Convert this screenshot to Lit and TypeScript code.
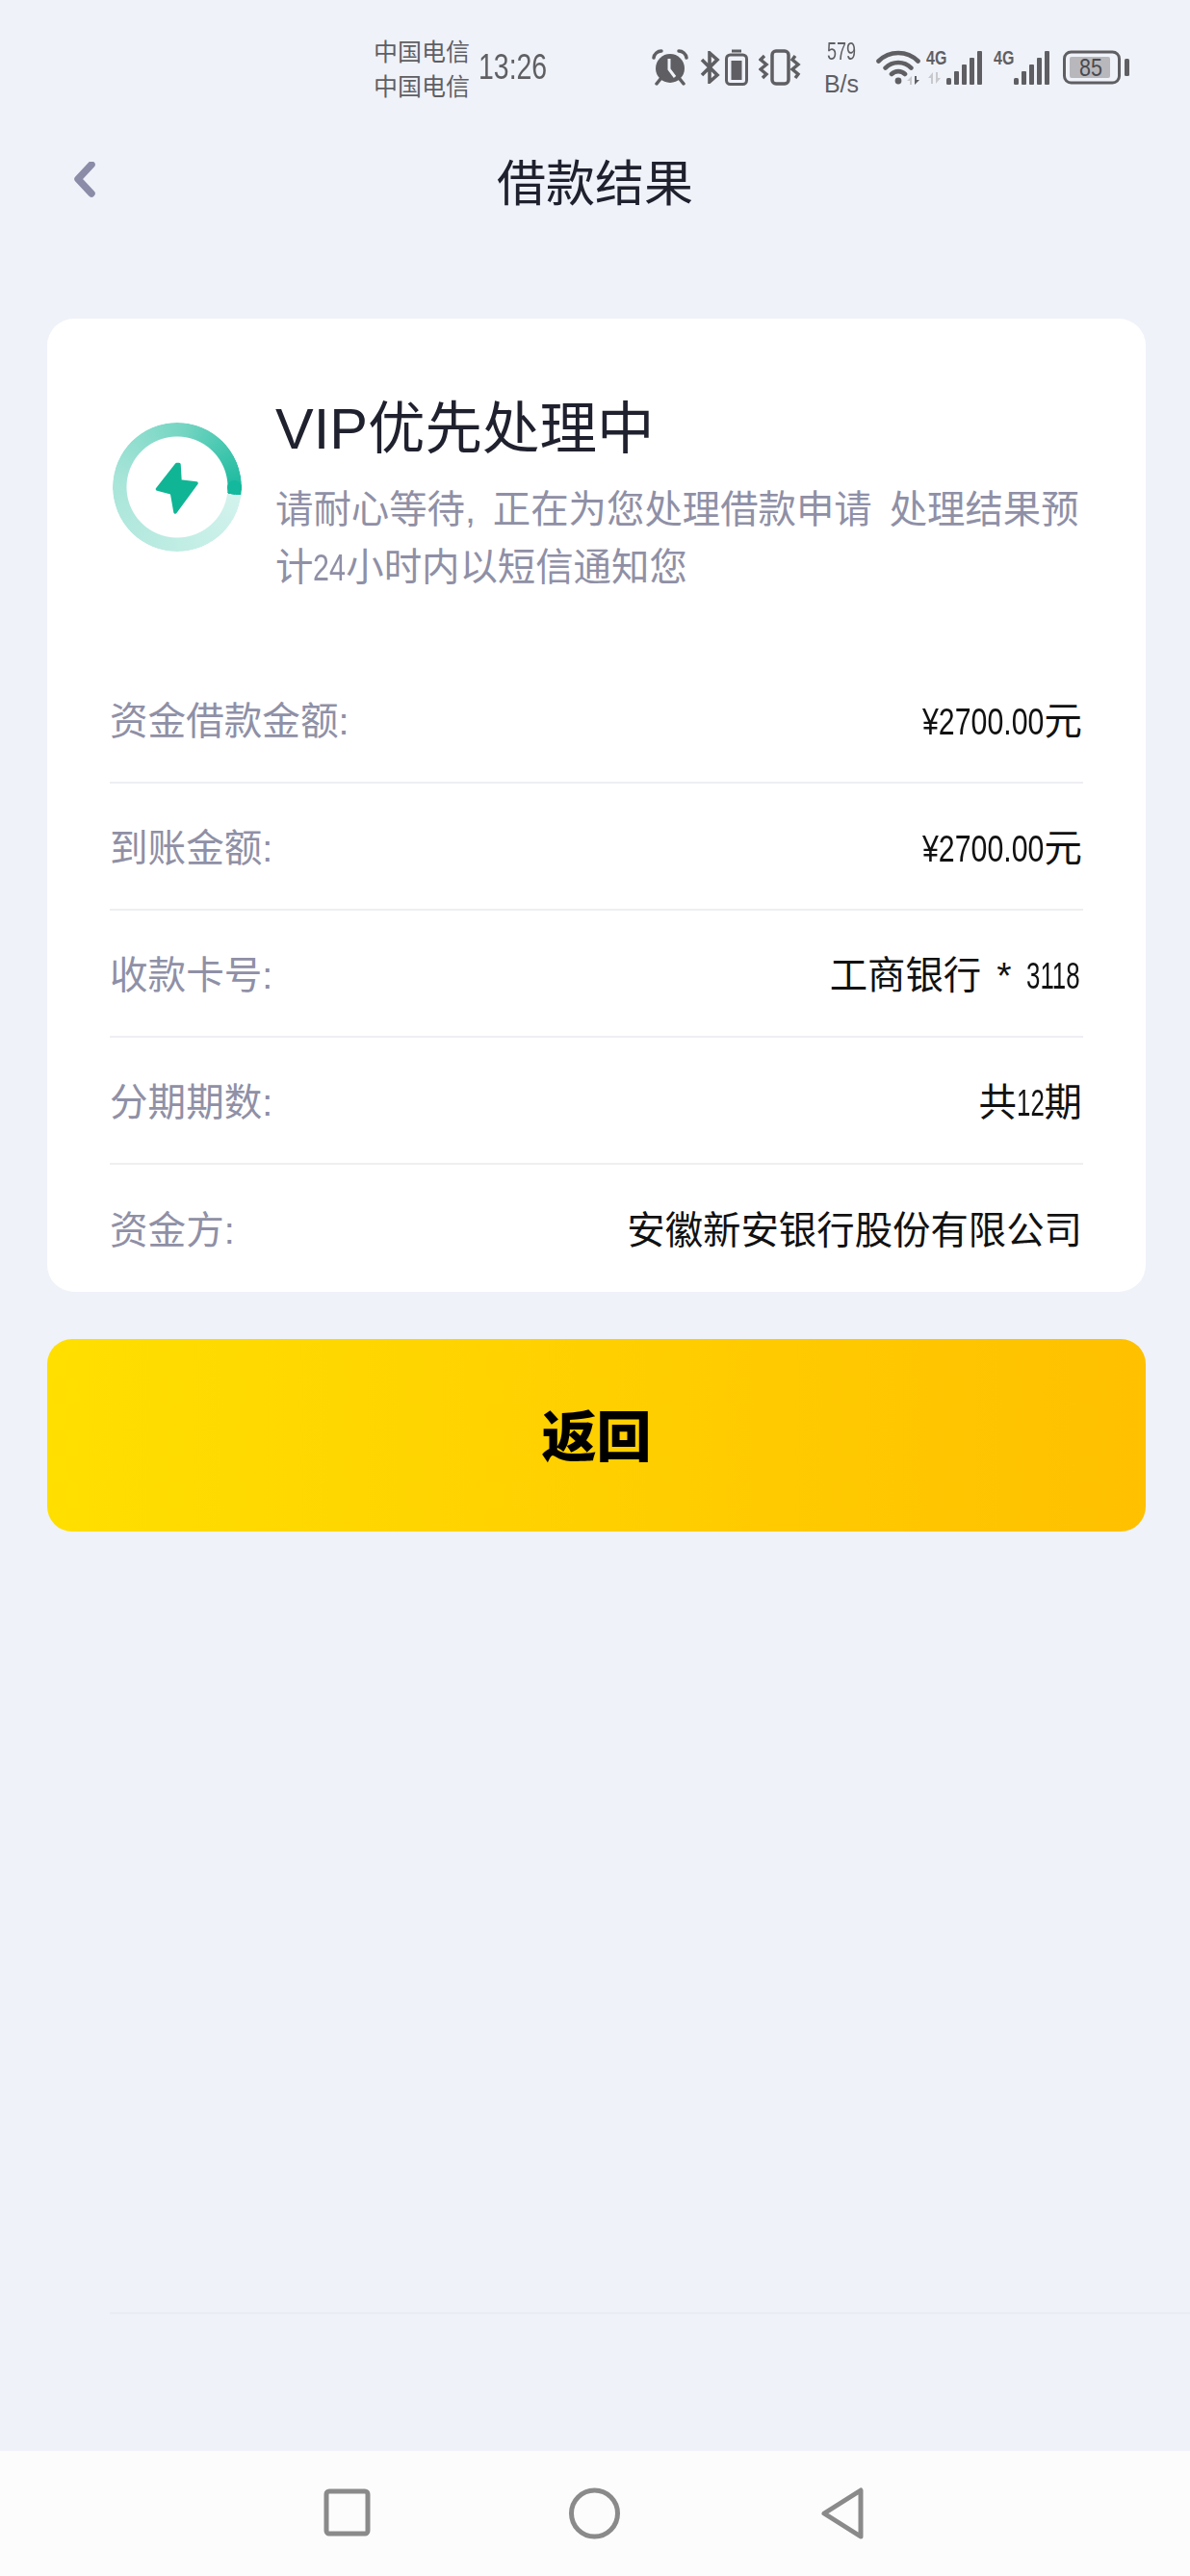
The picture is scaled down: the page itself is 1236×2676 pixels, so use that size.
import { LitElement, html, css, svg } from 'lit';
import { customElement } from 'lit/decorators.js';

const rows = [
  { label: '资金借款金额:', value: '¥2700.00元' },
  { label: '到账金额:', value: '¥2700.00元' },
  { label: '收款卡号:', value: '工商银行 * 3118' },
  { label: '分期期数:', value: '共12期' },
  { label: '资金方:', value: '安徽新安银行股份有限公司' },
];

const descLines = ['请耐心等待, 正在为您处理借款申请 处理结果预', '计24小时内以短信通知您'];

// advance of the Arial-metric glyphs, and the tighter advance this UI's digits get
const wide = (c: string) => (c === '.' || c === ':' ? 0.278 : 0.556);
const tight = (c: string) => (c === '1' ? 0.3 : c === '.' || c === ':' ? 0.2 : 0.43);

// the system font has condensed digits, so squeeze each digit run horizontally
const narrowRun = (text: string, scale?: number) => {
  const natural = [...text].reduce((sum, c) => sum + wide(c), 0);
  const target = [...text].reduce((sum, c) => sum + tight(c), 0);
  const sx = scale ?? target / natural;
  return html`<span class="narrow" style="width:${natural * sx}em;transform:scaleX(${sx})">${text}</span>`;
};

const withNarrowDigits = (text: string) =>
  text
    .split(/([¥\d.:]+)/)
    .map((part, i) => (i % 2 ? narrowRun(part) : part));

// signal bars, with the little up/down arrows only on the first sim
const signal = (arrows: boolean) => html`
  <svg class="sig" width="60" height="42" viewBox="0 -4 60 42">
    <text class="tag" transform="translate(0 16) scale(0.8 1)">4G</text>
    ${arrows
      ? svg`<path d="M7 24l-5 6h3v6h2zM10 36l5-6h-3v-6h-2z" fill="#c8c9cd"/>`
      : ''}
    <g fill="#5f5f63">
      <rect x="21" y="30" width="5" height="7" rx="1.5"/>
      <rect x="29" y="23" width="5" height="14" rx="1"/>
      <rect x="37" y="16" width="5" height="21" rx="1"/>
      <rect x="45" y="9" width="5" height="28" rx="1"/>
      <rect x="53" y="2" width="5" height="35" rx="1"/>
    </g>
  </svg>
`;

@customElement('app-root')
export class AppRoot extends LitElement {
  static styles = css`
    :host {
      display: flex;
      flex-direction: column;
      height: 2676px;
      background: #eff2f9;
      font-family: "Liberation Sans", "Noto Sans CJK SC", sans-serif;
      color: #111;
    }

    .narrow {
      display: inline-block;
      white-space: pre;
      transform-origin: left center;
    }

    .status {
      display: flex;
      align-items: center;
      height: 140px;
      padding-left: 388px;
      color: #5f5f63;
      flex: none;
    }
    .carriers {
      width: 100px;
      font-size: 25px;
      line-height: 36px;
      font-family: "Noto Sans CJK SC", sans-serif;
    }
    .time {
      margin-left: 9px;
      width: 180px;
      font-size: 36px;
    }
    .status svg {
      display: block;
      flex: none;
    }
    .bt { margin-left: 12px; }
    .cell { margin-left: 4px; }
    .vib { margin-left: 11px; }
    .speed {
      width: 40px;
      margin-left: 20px;
      text-align: center;
      font-size: 25px;
      line-height: 34px;
    }
    .wifi { margin-left: 16px; }
    .sig {
      margin: -4px 0 0 2px;
    }
    .sig + .sig { margin-left: 10px; }
    .batt { margin-left: 12px; }
    .tag {
      font-weight: 700;
      font-size: 20px;
      fill: #5f5f63;
    }
    .level {
      font-size: 25px;
      fill: #4a4a4e;
    }

    .head {
      display: grid;
      grid-template-columns: 1fr auto 1fr;
      align-items: center;
      height: 96px;
      flex: none;
    }
    .back {
      display: block;
      margin-left: 72px;
    }
    .head h1 {
      margin: 0 0 3px;
      font-size: 51px;
      font-weight: 400;
      color: #20212e;
      font-family: "Noto Sans CJK SC", sans-serif;
    }

    .card {
      margin: 95px 46px 0 49px;
      padding: 0 65px;
      height: 1011px;
      box-sizing: border-box;
      background: #fff;
      border-radius: 28px;
      flex: none;
    }
    .hero {
      display: flex;
      height: 351px;
      box-sizing: border-box;
      padding-top: 76px;
    }
    .ring {
      position: relative;
      width: 134px;
      height: 134px;
      margin: 32px 35px 0 3px;
      flex: none;
    }
    .arc {
      width: 100%;
      height: 100%;
      border-radius: 50%;
      background: conic-gradient(from 97deg, #d3f3ed, #a8e5d9 50%, #74d5c2 75%, #14b89c 100%);
      -webkit-mask: radial-gradient(circle, transparent 52px, #000 53px);
      mask: radial-gradient(circle, transparent 52px, #000 53px);
    }
    .cap {
      position: absolute;
      right: 0;
      top: 60px;
      width: 15px;
      height: 15px;
      border-radius: 50%;
      background: #14b89c;
    }
    .bolt {
      position: absolute;
      inset: 0;
    }
    .title {
      font-size: 59.5px;
      line-height: 78px;
      color: #20212e;
    }
    .desc {
      margin-top: 14px;
      font-size: 39.4px;
      line-height: 60px;
      word-spacing: 7px;
      white-space: nowrap;
      color: #8f90a6;
    }

    .row {
      display: flex;
      justify-content: space-between;
      align-items: center;
      height: 132px;
      box-sizing: border-box;
      padding-bottom: 3px;
      font-size: 39.6px;
      border-bottom: 2px solid #eeeff2;
    }
    .row:last-child {
      border-bottom: 0;
    }
    .row .k {
      color: #8f90a6;
    }
    .row .v {
      padding-right: 1px;
      font-size: 39.4px;
      word-spacing: 5px;
    }

    .btn {
      display: flex;
      align-items: center;
      justify-content: center;
      margin: 49px 46px 0 49px;
      padding-bottom: 6px;
      box-sizing: border-box;
      height: 200px;
      border-radius: 26px;
      background: linear-gradient(90deg, #ffdf00, #ffc000);
      font-size: 57px;
      font-weight: 900;
      color: #000;
      font-family: "Noto Sans CJK SC", sans-serif;
      flex: none;
    }

    .rule {
      margin: 811px 0 0 114px;
      height: 2px;
      background: #e9ecf4;
      flex: none;
    }

    .nav {
      margin-top: auto;
      height: 130px;
      background: #fcfcfc;
      flex: none;
    }
    .nav svg {
      display: block;
    }
  `;

  render() {
    return html`
      <div class="status">
        <div class="carriers">中国电信<br />中国电信</div>
        <div class="time">${narrowRun('13:26', 0.79)}</div>
        <svg width="38" height="38" viewBox="0 0 38 38">
          <circle cx="19" cy="20" r="15" fill="#5f5f63" />
          <path d="M2 9a8 8 0 0 1 8-7M36 9a8 8 0 0 0-8-7M9 31l-4 5M29 31l4 5" fill="none" stroke="#5f5f63" stroke-width="3.5" stroke-linecap="round" />
          <path d="M18 10v11l6 8" fill="none" stroke="#eff2f9" stroke-width="3" />
        </svg>
        <svg class="bt" width="22" height="34" viewBox="0 0 22 34">
          <path d="M2 9l16 16-8 7V2l8 7L2 25" fill="none" stroke="#5f5f63" stroke-width="3.6" />
        </svg>
        <svg class="cell" width="24" height="38" viewBox="0 0 24 38">
          <rect x="7" y="0.5" width="10" height="3" fill="#5f5f63" />
          <rect x="1.5" y="6" width="21" height="30.5" rx="4" fill="none" stroke="#5f5f63" stroke-width="3" />
          <rect x="6.5" y="12" width="11" height="20" fill="#5f5f63" />
        </svg>
        <svg class="vib" width="46" height="38" viewBox="0 0 46 38">
          <rect x="14" y="2" width="17" height="34" rx="4" fill="none" stroke="#5f5f63" stroke-width="3.5" />
          <path d="M6 7L2 11l6 5-6 5 6 5-4 4M38 7l-3 4 6 5-6 5 6 5-3 4" fill="none" stroke="#5f5f63" stroke-width="3.4" />
        </svg>
        <div class="speed">${narrowRun('579', 0.72)}<br />B/s</div>
        <svg class="wifi" width="50" height="40" viewBox="0 0 50 40">
          <path d="M2.5 13.5A29 29 0 0 1 43.5 13.5M9.6 20.6A19 19 0 0 1 36.4 20.6M16 27A10 10 0 0 1 30 27" fill="none" stroke="#5f5f63" stroke-width="4.6" stroke-linecap="round" />
          <circle cx="23" cy="34" r="3.4" fill="#5f5f63" />
          <path d="M37 29l-5 5h3v4h2z" fill="#c8c9cd" />
          <path d="M40 29v9l5-5h-3v-4z" fill="#5f5f63" />
        </svg>
        ${signal(true)}${signal(false)}
        <svg class="batt" width="70" height="36" viewBox="0 0 70 36">
          <rect x="1.5" y="2" width="57" height="32" rx="7" fill="none" stroke="#5f5f63" stroke-width="3" />
          <rect x="7" y="7" width="42" height="22" rx="2" fill="#b8b8bc" />
          <rect x="64" y="9" width="5" height="18" rx="1.5" fill="#5f5f63" />
          <text class="level" transform="translate(17 27) scale(0.86 1)">85</text>
        </svg>
      </div>

      <div class="head">
        <svg class="back" width="28" height="40" viewBox="0 0 28 40">
          <path d="M23 3L9 18l14 15" fill="none" stroke="#8a8ca8" stroke-width="7.5" stroke-linecap="round" stroke-linejoin="round" />
        </svg>
        <h1>借款结果</h1>
        <div></div>
      </div>

      <div class="card">
        <div class="hero">
          <div class="ring">
            <div class="arc"></div>
            <div class="cap"></div>
            <svg class="bolt" viewBox="0 0 134 134">
              <path d="M66.5 43.5h2.5L70 61l17 2-22 30-3.5-20-15-4z" fill="#10b595" stroke="#10b595" stroke-width="3.5" stroke-linejoin="round" />
            </svg>
          </div>
          <div>
            <div class="title">VIP优先处理中</div>
            <div class="desc">
              ${descLines.map((line) => html`<div>${withNarrowDigits(line)}</div>`)}
            </div>
          </div>
        </div>
        ${rows.map(
          (r) => html`<div class="row"><span class="k">${r.label}</span><span class="v">${withNarrowDigits(r.value)}</span></div>`
        )}
      </div>

      <div class="btn">返回</div>
      <div class="rule"></div>

      <div class="nav">
        <svg width="1236" height="130" viewBox="0 0 1236 130">
          <rect x="339" y="42" width="43" height="44" rx="3" fill="none" stroke="#8a8a8a" stroke-width="5" />
          <circle cx="617.5" cy="65" r="24" fill="none" stroke="#8a8a8a" stroke-width="5" />
          <path d="M894 41v48L856 65z" fill="none" stroke="#8a8a8a" stroke-width="5" stroke-linejoin="round" />
        </svg>
      </div>
    `;
  }
}
